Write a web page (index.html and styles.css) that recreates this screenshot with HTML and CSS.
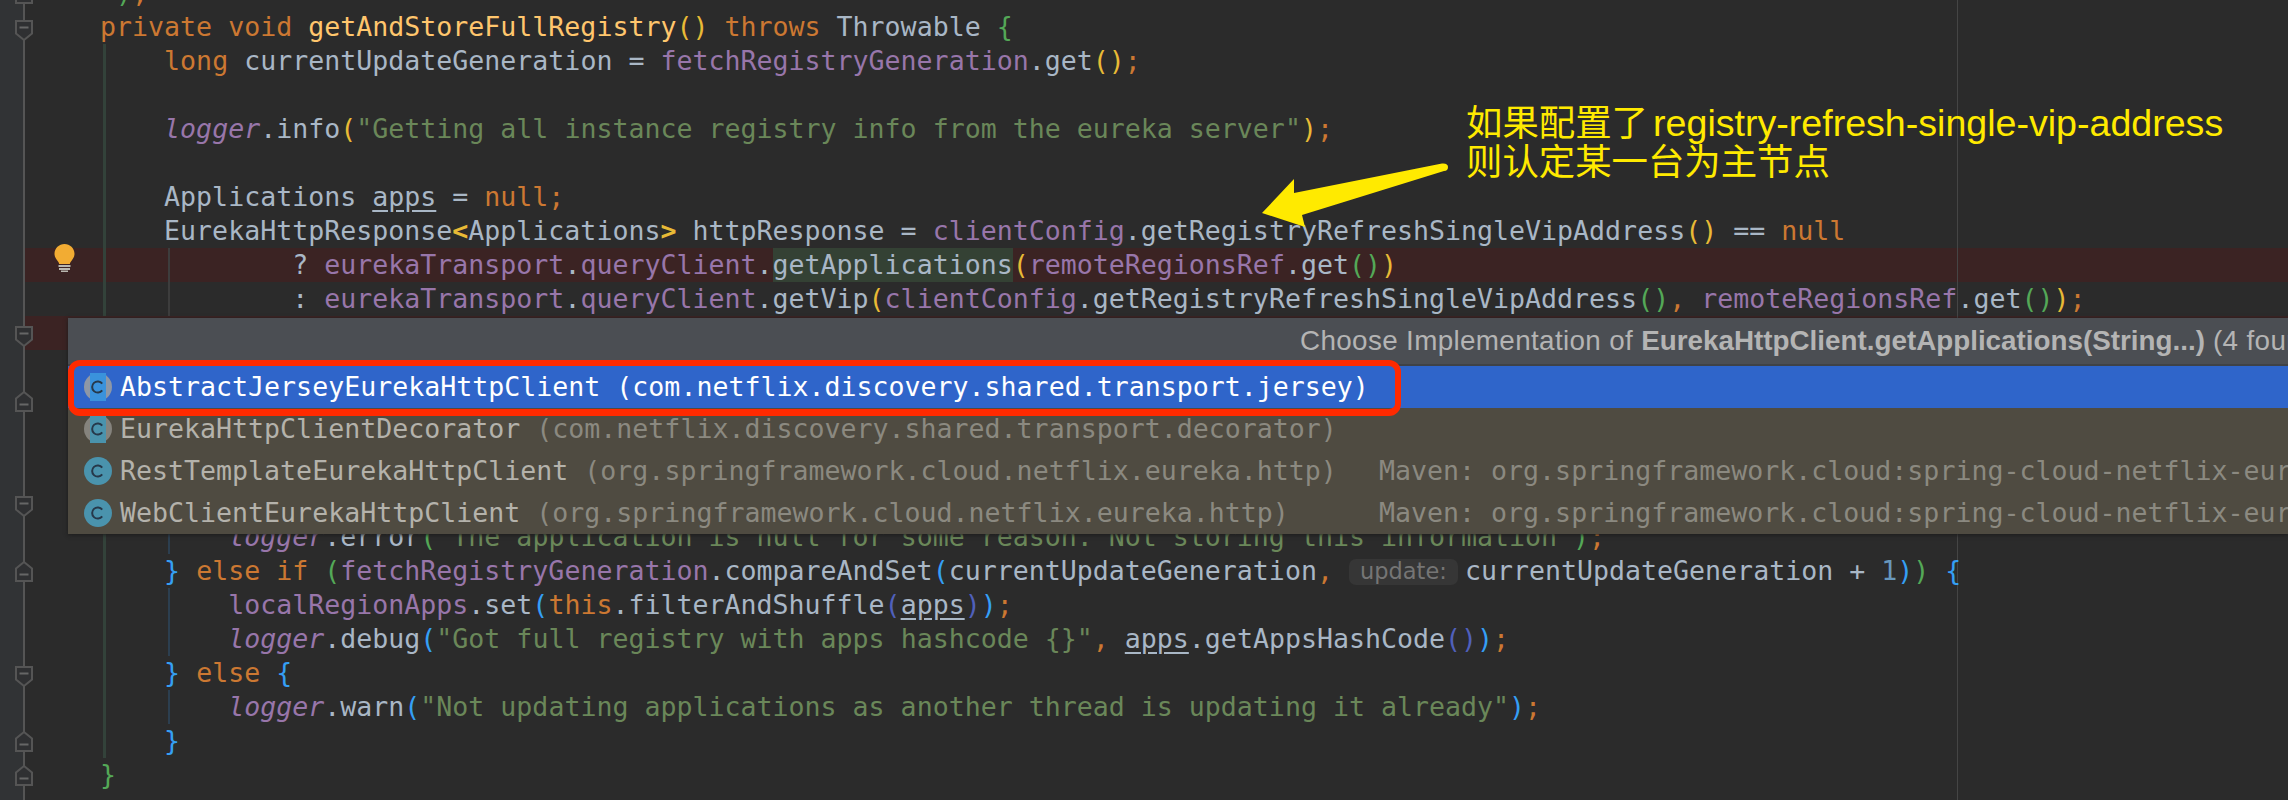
FILE: index.html
```html
<!DOCTYPE html>
<html lang="en">
<head>
<meta charset="utf-8">
<title>Choose Implementation</title>
<link rel="stylesheet" href="styles.css">
</head>
<body>
<svg class="defs" width="0" height="0" aria-hidden="true">
  <symbol id="fold-open" viewBox="0 0 18 21"><path d="M1 1H17V13.500L9 20 1 13.500Z" fill="#2f3032" stroke="#555" stroke-width="2"/><path d="M4.500 7.500H13.500" stroke="#666" stroke-width="2"/></symbol>
  <symbol id="fold-close" viewBox="0 0 18 21"><path d="M1 20H17V7.500L9 1 1 7.500Z" fill="#2f3032" stroke="#555" stroke-width="2"/><path d="M4.500 13.500H13.500" stroke="#666" stroke-width="2"/></symbol>
</svg>
<main class="editor">
  <div class="line"><div class="gut"><svg class="mark close"><use href="#fold-close"/></svg></div><div class="code">     <span class="b2">)</span><span class="k">;</span></div></div>
  <div class="line"><div class="gut"><svg class="mark open"><use href="#fold-open"/></svg></div><div class="code">    <span class="k">private void </span><span class="m">getAndStoreFullRegistry</span><span class="b1">()</span> <span class="k">throws</span> Throwable <span class="b2">{</span></div></div>
  <div class="line g1"><div class="gut"></div><div class="code">        <span class="k">long</span> currentUpdateGeneration = <span class="f">fetchRegistryGeneration</span>.get<span class="b1">()</span><span class="k">;</span></div></div>
  <div class="line g1"><div class="gut"></div><div class="code"></div></div>
  <div class="line g1"><div class="gut"></div><div class="code">        <span class="f i">logger</span>.info<span class="b1">(</span><span class="s">"Getting all instance registry info from the eureka server"</span><span class="b1">)</span><span class="k">;</span></div></div>
  <div class="line g1"><div class="gut"></div><div class="code"></div></div>
  <div class="line g1"><div class="gut"></div><div class="code">        Applications <span class="u">apps</span> = <span class="k">null;</span></div></div>
  <div class="line g1"><div class="gut"></div><div class="code">        EurekaHttpResponse<span class="b1 bold">&lt;</span>Applications<span class="b1 bold">&gt;</span> httpResponse = <span class="f">clientConfig</span>.getRegistryRefreshSingleVipAddress<span class="b1">()</span> == <span class="k">null</span></div></div>
  <div class="line g1 g2 red bulbline"><div class="gut red"></div><svg class="bulb" viewBox="0 0 21 28"><path d="M10.500 0C5 0 .5 4.300 .5 9.800 .5 13 2.300 15 4 17.500 4.800 18.600 5 19 5.100 20H15.900C16 19 16.200 18.600 17 17.500 18.700 15 20.500 13 20.500 9.800 20.500 4.300 16 0 10.500 0Z" fill="#f2ac33"/><path d="M4.500 22H16.500M5 25H16M7 27.500H14" stroke="#b9b7b0" stroke-width="1.800"/></svg><div class="code">                ? <span class="f">eurekaTransport</span>.<span class="f">queryClient</span>.<span class="hl">getApplications</span><span class="b1">(</span><span class="f">remoteRegionsRef</span>.get<span class="b2">()</span><span class="b1">)</span></div></div>
  <div class="line g1 g2"><div class="gut"></div><div class="code">                : <span class="f">eurekaTransport</span>.<span class="f">queryClient</span>.getVip<span class="b1">(</span><span class="f">clientConfig</span>.getRegistryRefreshSingleVipAddress<span class="b2">()</span><span class="k">,</span> <span class="f">remoteRegionsRef</span>.get<span class="b2">()</span><span class="b1">)</span><span class="k">;</span></div></div>
  <div class="line red"><div class="gut red"><svg class="mark open"><use href="#fold-open"/></svg></div><div class="code"></div></div>
  <div class="line"><div class="gut"></div><div class="code"></div></div>
  <div class="line"><div class="gut"><svg class="mark close"><use href="#fold-close"/></svg></div><div class="code"></div></div>
  <div class="line"><div class="gut"></div><div class="code"></div></div>
  <div class="line"><div class="gut"></div><div class="code"></div></div>
  <div class="line"><div class="gut"><svg class="mark open"><use href="#fold-open"/></svg></div><div class="code"></div></div>
  <div class="line g1 g3"><div class="gut"></div><div class="code">            <span class="f i">logger</span>.error<span class="b2">(</span><span class="s">"The application is null for some reason. Not storing this information"</span><span class="b2">)</span><span class="k">;</span></div></div>
  <div class="line g1"><div class="gut"><svg class="mark close"><use href="#fold-close"/></svg></div><div class="code">        <span class="b3">}</span> <span class="k">else if</span> <span class="b2">(</span><span class="f">fetchRegistryGeneration</span>.compareAndSet<span class="b3">(</span>currentUpdateGeneration<span class="k">,</span> <span class="inlay">update:</span>currentUpdateGeneration + <span class="n">1</span><span class="b3">)</span><span class="b2">)</span> <span class="b3">{</span></div></div>
  <div class="line g1 g3"><div class="gut"></div><div class="code">            <span class="f">localRegionApps</span>.set<span class="b3">(</span><span class="k">this</span>.filterAndShuffle<span class="b4">(</span><span class="u">apps</span><span class="b4">)</span><span class="b3">)</span><span class="k">;</span></div></div>
  <div class="line g1 g3"><div class="gut"></div><div class="code">            <span class="f i">logger</span>.debug<span class="b3">(</span><span class="s">"Got full registry with apps hashcode {}"</span><span class="k">,</span> <span class="u">apps</span>.getAppsHashCode<span class="b4">()</span><span class="b3">)</span><span class="k">;</span></div></div>
  <div class="line g1"><div class="gut"><svg class="mark open"><use href="#fold-open"/></svg></div><div class="code">        <span class="b3">}</span> <span class="k">else</span> <span class="b3">{</span></div></div>
  <div class="line g1 g3"><div class="gut"></div><div class="code">            <span class="f i">logger</span>.warn<span class="b3">(</span><span class="s">"Not updating applications as another thread is updating it already"</span><span class="b3">)</span><span class="k">;</span></div></div>
  <div class="line g1"><div class="gut"><svg class="mark close"><use href="#fold-close"/></svg></div><div class="code">        <span class="b3">}</span></div></div>
  <div class="line"><div class="gut"><svg class="mark close"><use href="#fold-close"/></svg></div><div class="code">    <span class="b2">}</span></div></div>
  <div class="line"><div class="gut"></div><div class="code"></div></div>
</main>

<aside class="popup">
  <header class="popup-head">Choose Implementation of <b>EurekaHttpClient.getApplications(String...)</b> (4 found)</header>
  <div class="row selected">
    <svg class="icon" viewBox="0 0 28 28"><circle cx="14" cy="14" r="14" fill="#8e97a6"/><rect x="6" width="16" height="28" fill="#3a92dc"/><path d="M18.200 10.600A5.600 5.600 0 1 0 18.200 17.400" fill="none" stroke="#26384a" stroke-width="2"/></svg>
    <span class="main">AbstractJerseyEurekaHttpClient (com.netflix.discovery.shared.transport.jersey)</span>
  </div>
  <div class="row">
    <svg class="icon" viewBox="0 0 28 28"><circle cx="14" cy="14" r="14" fill="#85837d"/><rect x="6" width="16" height="28" fill="#4a93ad"/><path d="M18.200 10.600A5.600 5.600 0 1 0 18.200 17.400" fill="none" stroke="#26384a" stroke-width="2"/></svg>
    <span class="main">EurekaHttpClientDecorator <span class="dim">(com.netflix.discovery.shared.transport.decorator)</span></span>
  </div>
  <div class="row">
    <svg class="icon" viewBox="0 0 28 28"><circle cx="14" cy="14" r="14" fill="#4a93ad"/><path d="M18.200 10.600A5.600 5.600 0 1 0 18.200 17.400" fill="none" stroke="#26384a" stroke-width="2"/></svg>
    <span class="main">RestTemplateEurekaHttpClient <span class="dim">(org.springframework.cloud.netflix.eureka.http)</span></span>
    <span class="dim">Maven: org.springframework.cloud:spring-cloud-netflix-eureka</span>
  </div>
  <div class="row">
    <svg class="icon" viewBox="0 0 28 28"><circle cx="14" cy="14" r="14" fill="#4a93ad"/><path d="M18.200 10.600A5.600 5.600 0 1 0 18.200 17.400" fill="none" stroke="#26384a" stroke-width="2"/></svg>
    <span class="main">WebClientEurekaHttpClient <span class="dim">(org.springframework.cloud.netflix.eureka.http)</span></span>
    <span class="dim">Maven: org.springframework.cloud:spring-cloud-netflix-eureka</span>
  </div>
  <div class="ring"></div>
</aside>

<div class="note">如果配置了 <span class="note-latin">registry-refresh-single-vip-address</span><br>则认定某一台为主节点</div>
<svg class="arrow" viewBox="0 0 195 70"><path d="M4 53L36 19V33L184 3.500Q190 3 190 7T186 11L44 55 47 67Z" fill="#ffea00"/></svg>
</body>
</html>
```
FILE: styles.css
```css
html, body {
  margin: 0;
  height: 800px;
  overflow: hidden;
  background: #2b2b2b;
}
body { position: relative; }
.defs { position: absolute; }

.editor {
  margin-top: -24px;
  color: #a9b7c6;
  font: 26.6px/34px "DejaVu Sans Mono", monospace;
}

.line {
  --g1c: transparent;
  --g2c: transparent;
  --bg: #2b2b2b;
  display: flex;
  height: 34px;
  background:
    linear-gradient(var(--g1c), var(--g1c)) 103px 0 / 3px 100% no-repeat,
    linear-gradient(var(--g2c), var(--g2c)) 168px 0 / 2px 100% no-repeat,
    linear-gradient(#454545, #454545) 1957px 0 / 1px 100% no-repeat,
    var(--bg);
}
.line.g1 { --g1c: #33423a; }
.line.g2 { --g2c: #3d3d3d; }
.line.g3 { --g2c: #2c3f50; }
.line.red { --bg: #3b2323; }
.bulbline { position: relative; }

.gut {
  flex: none;
  width: 36px;
  box-sizing: border-box;
  padding-left: 15px;
  background:
    linear-gradient(#555, #555) 23px 0 / 2px 100% no-repeat,
    linear-gradient(90deg, #313335 23px, #2b2b2b 23px);
}
.gut.red {
  background:
    linear-gradient(#555, #555) 23px 0 / 2px 100% no-repeat,
    linear-gradient(90deg, #313335 25px, #3b2323 25px);
}
.mark { display: block; width: 18px; height: 21px; }
.mark.open { padding-top: 10px; }
.mark.close { padding-top: 7px; }

.bulb {
  position: absolute;
  left: 54px;
  top: -4px;
  width: 21px;
  height: 28px;
}

.code { flex: 1; white-space: pre; }
.k { color: #cc7832; }
.f { color: #9876aa; }
.s { color: #6a8759; }
.m { color: #ffc66d; }
.n { color: #6897bb; }
.i { font-style: italic; }
.u { text-decoration: underline; text-underline-offset: 4px; }
.b1 { color: #e8ba36; }
.b2 { color: #54a857; }
.b3 { color: #359ff4; }
.b4 { color: #5060bb; }
.bold { font-weight: bold; }
.hl { background: #344134; display: inline-block; height: 34px; }
.inlay {
  display: inline-block;
  width: 109px;
  height: 26px;
  margin: 0 7px 0 0;
  border-radius: 7px;
  background: #363636;
  color: #757575;
  font: 22.5px/25px "DejaVu Sans", sans-serif;
  text-align: center;
  vertical-align: 1px;
}

.popup {
  position: absolute;
  left: 68px;
  right: 0;
  top: 318px;
  height: 216px;
  overflow: hidden;
  background: #4f4b41;
  box-shadow: 0 1px 4px #1c1c1c;
}
.popup-head {
  box-sizing: border-box;
  height: 48px;
  padding: 7px 0 0 1232px;
  background: #4b4e53;
  border-bottom: 2px solid #3f4246;
  color: #b4b4b4;
  font: 27.8px/32px "Liberation Sans", sans-serif;
  letter-spacing: .36px;
  white-space: pre;
}
.popup-head b { letter-spacing: 0; }
.row {
  display: flex;
  align-items: center;
  height: 42px;
  padding-left: 16px;
  color: #b4b2ab;
  font: 26.6px/42px "DejaVu Sans Mono", monospace;
  white-space: pre;
}
.row.selected { background: #2f65ca; color: #fff; }
.icon { flex: none; width: 28px; height: 28px; margin-right: 8px; }
.main { flex: none; width: 1259px; }
.dim { color: #8b8980; flex: none; }

.ring {
  position: absolute;
  left: 0;
  top: 42px;
  width: 1333px;
  height: 56px;
  box-sizing: border-box;
  border: 6px solid #ff2a00;
  border-bottom-width: 7px;
  border-radius: 12px;
}

.note {
  position: absolute;
  left: 1466px;
  top: 104px;
  color: #ffea00;
  font: 36.4px/39px "Liberation Sans", "Noto Sans CJK SC", sans-serif;
  white-space: nowrap;
}
.note-latin { font-size: 37.6px; margin-left: -5px; }
.arrow {
  position: absolute;
  left: 1258px;
  top: 160px;
  width: 195px;
  height: 70px;
}
```
